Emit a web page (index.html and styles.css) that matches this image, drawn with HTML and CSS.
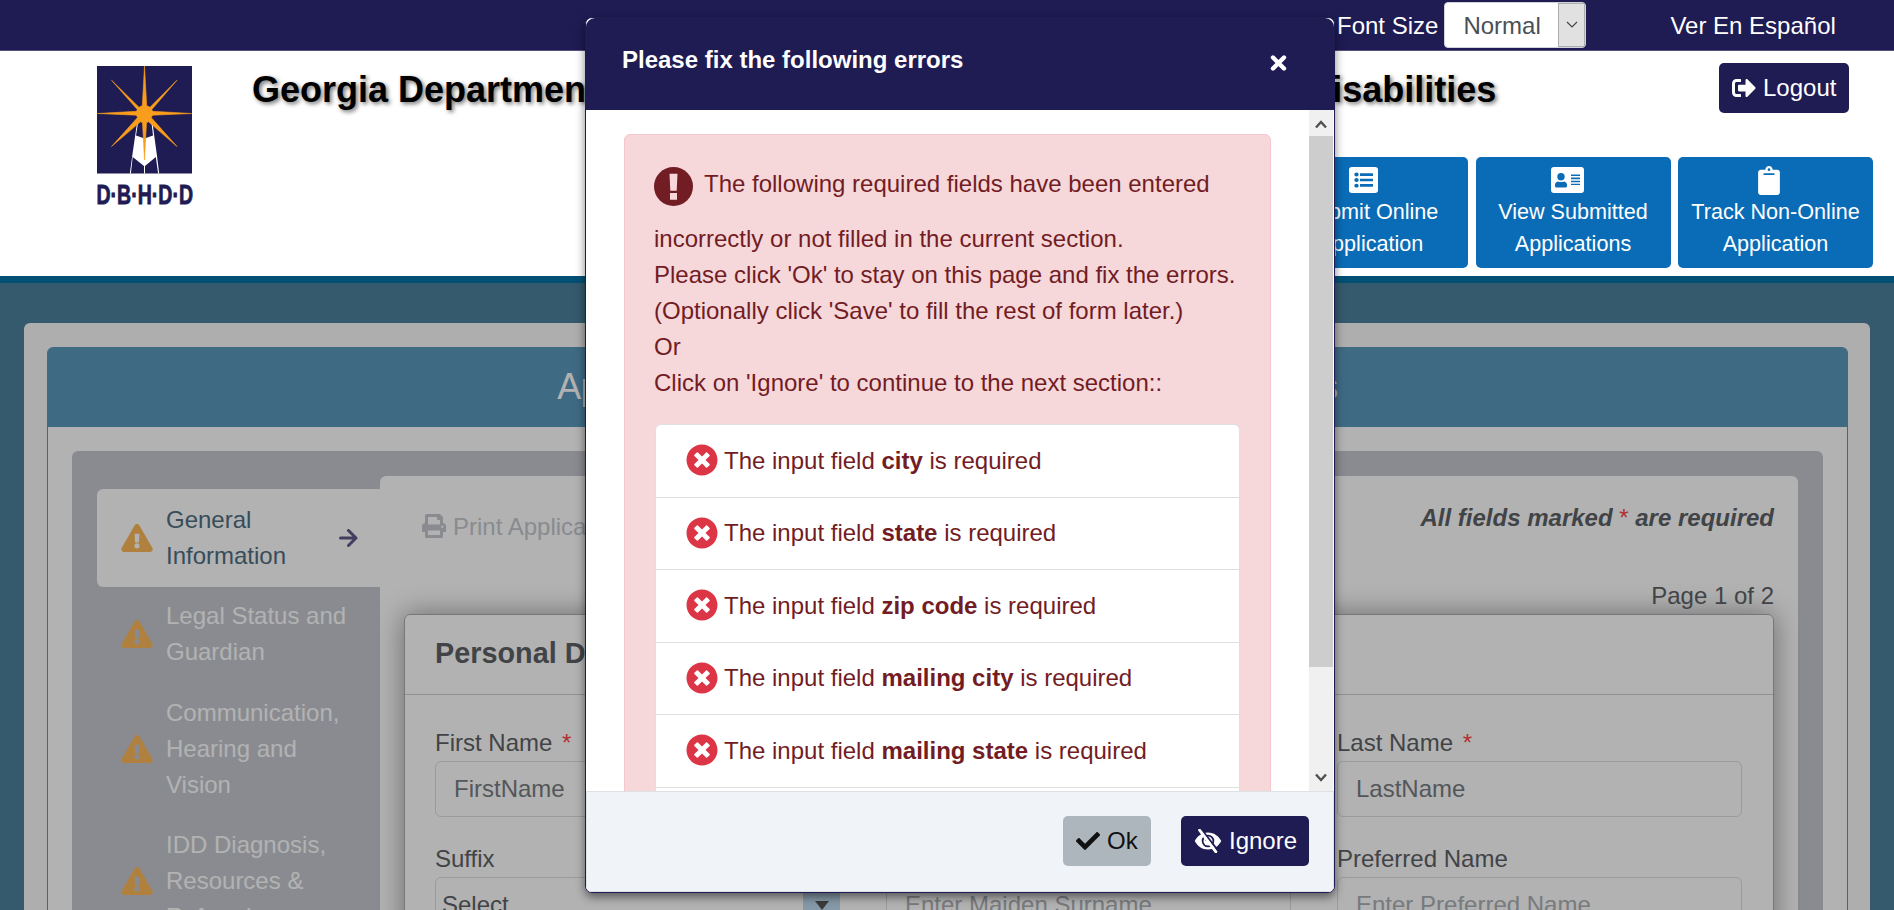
FILE: index.html
```
<!DOCTYPE html>
<html lang="en">
<head>
<meta charset="utf-8">
<title>DBHDD Application</title>
<link rel="stylesheet" href="styles.css">
</head>
<body>
<svg class="defs" aria-hidden="true">
  <symbol id="warn" viewBox="0 0 576 512"><path d="M569.5 440c18.500 32-4.700 72-41.600 72H48.100c-36.900 0-60-40.100-41.600-72L246.400 24c18.500-32 64.700-32 83.200 0l239.900 416zM288 354a46 46 0 1 0 0 92 46 46 0 0 0 0-92zm-43.700-165.300l7.400 136c.4 6.400 5.600 11.300 12 11.300h48.600c6.400 0 11.600-4.900 12-11.300l7.400-136c.4-6.900-5.100-12.700-12-12.700h-63.400c-6.900 0-12.400 5.800-12 12.700z"/></symbol>
  <symbol id="bad" viewBox="0 0 512 512"><path d="M256 8C119 8 8 119 8 256s111 248 248 248 248-111 248-248S393 8 256 8zm121.600 313.100c4.700 4.700 4.700 12.300 0 17L338 377.600c-4.700 4.700-12.300 4.700-17 0L256 312l-65.100 65.600c-4.700 4.700-12.300 4.700-17 0L134.400 338c-4.700-4.700-4.700-12.300 0-17l65.600-65-65.600-65.100c-4.700-4.700-4.700-12.300 0-17l39.600-39.600c4.700-4.700 12.300-4.700 17 0l65 65.700 65.100-65.600c4.700-4.700 12.300-4.700 17 0l39.600 39.600c4.700 4.700 4.700 12.300 0 17L312 256z"/></symbol>
</svg>

<header class="site-header">
  <div class="topbar">
    <span class="font-label">Font Size</span>
    <div class="size-select"><span>Normal</span><i><svg viewBox="0 0 12 8"><path d="M1 1l5 5 5-5" fill="none" stroke="#444" stroke-width="1.200"/></svg></i></div>
    <a class="lang">Ver En Español</a>
  </div>
  <div class="masthead">
    <svg class="logo" viewBox="0 0 96 140">
      <rect width="95" height="107.500" fill="#1f1b53"/>
      <path d="M40 57h1L39 69.500l8.500 3 8.500-3L54.500 57h1L60 90l2.200 17.500h-1.100L58.800 91 48 100v7.500h-1V100L35.700 91l-1.800 16.500h-1.100L35.500 88z" fill="#fff"/>
      <path d="M47.500 0l2.200 39.500 3.300 1.800L80 14.200 54.800 43.500l.9 1.800L94.500 47.500l-38.800 1.700-1.500 2.300L80 80.500 51.500 55.800l-2 1L47.500 94l-2-37.200-2-1L14.500 80.500 40.500 51.500l-1.200-2.300L.5 47.500l38.800-2.200 1-1.800L14.500 14.200 42 41.300l3.300-1.800z" fill="#f99d1c" stroke="#f99d1c" stroke-width=".6"/>
      <text x="-.5" y="138" textLength="96.500" lengthAdjust="spacingAndGlyphs" class="logo-text">D·B·H·D·D</text>
    </svg>
    <h1>Georgia Department of Behavioral Health and Developmental Disabilities</h1>
    <div class="actions">
      <a class="btn navy logout"><svg viewBox="0 0 512 512"><path d="M497 273L329 441c-15 15-41 4.500-41-17v-96H152c-13.300 0-24-10.700-24-24v-96c0-13.300 10.700-24 24-24h136V88c0-21.400 25.900-32 41-17l168 168c9.300 9.400 9.300 24.600 0 34zM192 436v-40c0-6.600-5.400-12-12-12H96c-17.700 0-32-14.300-32-32V160c0-17.700 14.300-32 32-32h84c6.600 0 12-5.400 12-12V76c0-6.600-5.400-12-12-12H96c-53 0-96 43-96 96v192c0 53 43 96 96 96h84c6.600 0 12-5.400 12-12z"/></svg>Logout</a>
      <nav class="tiles">
        <a><svg viewBox="0 0 29 29" preserveAspectRatio="none"><path fill-rule="evenodd" d="M3 0h23a3 3 0 0 1 3 3v23a3 3 0 0 1-3 3H3a3 3 0 0 1-3-3V3a3 3 0 0 1 3-3zM11 7v3h13V7zm0 6v3h13v-3zm0 6v3h13v-3zM7.500 6.200a2.200 2.200 0 1 0 0 4.400 2.200 2.200 0 0 0 0-4.400zm0 6.200a2.200 2.200 0 1 0 0 4.400 2.200 2.200 0 0 0 0-4.400zm0 6.200a2.200 2.200 0 1 0 0 4.400 2.200 2.200 0 0 0 0-4.400z"/></svg>Submit Online<br>Application</a>
        <a><svg class="wide" viewBox="0 0 33 26"><path fill-rule="evenodd" d="M3 0h27a3 3 0 0 1 3 3v20a3 3 0 0 1-3 3H3a3 3 0 0 1-3-3V3a3 3 0 0 1 3-3zM10 6a3.700 3.700 0 1 0 0 7.400A3.700 3.700 0 0 0 10 6zm-3 8.500Q4 15 4 18v1q0 1.500 1.500 1.500h9Q16 20.500 16 19v-1q0-3-3-3.500-3 1-6 0zM20 7.500V9h9V7.500zm0 3v1.700h9v-1.700zm0 3.200v1.500h9v-1.500zm0 3V18h9v-1.300z"/></svg>View Submitted<br>Applications</a>
        <a><svg class="clip" viewBox="0 0 384 512"><path fill-rule="evenodd" d="M384 112v352c0 26.500-21.500 48-48 48H48c-26.500 0-48-21.500-48-48V112c0-26.500 21.500-48 48-48h80c0-35.300 28.700-64 64-64s64 28.700 64 64h80c26.500 0 48 21.500 48 48zM192 40a24 24 0 1 0 0 48 24 24 0 0 0 0-48zM96 130v20q0 10 10 10h172q10 0 10-10v-20z"/></svg>Track Non-Online<br>Application</a>
      </nav>
    </div>
  </div>
</header>

<main class="page">
  <section class="shell">
    <div class="app">
      <h2>Application for Developmental Disabilities Services</h2>
      <div class="app-body">
        <div class="wizard">
          <nav class="tabs">
            <a class="tab active"><svg class="w"><use href="#warn"/></svg><span>General Information</span><svg class="arrow" viewBox="0 0 19 18"><path d="M1.500 9h15.500M9.500 1.500L17 9l-7.500 7.500" fill="none" stroke="currentColor" stroke-width="3" stroke-linecap="round" stroke-linejoin="round"/></svg></a>
            <a class="tab"><svg class="w"><use href="#warn"/></svg><span>Legal Status and Guardian</span></a>
            <a class="tab"><svg class="w"><use href="#warn"/></svg><span>Communication, Hearing and Vision</span></a>
            <a class="tab"><svg class="w"><use href="#warn"/></svg><span>IDD Diagnosis, Resources &amp; Referrals</span></a>
          </nav>
          <div class="panel">
            <div class="tools">
              <a class="print"><svg viewBox="0 0 512 512"><path fill-rule="evenodd" d="M448 192V77.300c0-8.500-3.400-16.600-9.400-22.600L393.400 9.400c-6-6-14.100-9.400-22.600-9.400H96C78.300 0 64 14.300 64 32v160c-35.300 0-64 28.700-64 64v112c0 8.800 7.200 16 16 16h48v96c0 17.700 14.300 32 32 32h320c17.700 0 32-14.300 32-32v-96h48c8.800 0 16-7.200 16-16V256c0-35.300-28.700-64-64-64zm-64 256H128v-96h256v96zm0-224H128V64h192v48c0 8.800 7.200 16 16 16h48v96zm48 72c-13.300 0-24-10.700-24-24s10.700-24 24-24 24 10.700 24 24-10.700 24-24 24z"/></svg>Print Application</a>
              <strong>All fields marked <em class="req">*</em> are required</strong>
            </div>
            <p class="pager">Page 1 of 2</p>
            <div class="card">
              <h3>Personal Details</h3>
              <div class="grid">
                <div><label>First Name <em class="req">*</em></label><div class="input">FirstName</div></div>
                <div><label>Middle Name</label><div class="input">MiddleName</div></div>
                <div><label>Last Name <em class="req">*</em></label><div class="input">LastName</div></div>
                <div><label>Suffix</label><div class="input select"><span>Select</span><i></i></div></div>
                <div><label>Maiden Surname</label><div class="input hint">Enter Maiden Surname</div></div>
                <div><label>Preferred Name</label><div class="input hint">Enter Preferred Name</div></div>
              </div>
            </div>
          </div>
        </div>
      </div>
    </div>
  </section>
  <div class="overlay"></div>
</main>

<div class="modal" role="dialog">
  <div class="modal-head"><h4>Please fix the following errors</h4><svg viewBox="0 0 17 16"><path d="M3 2.500l11 11M14 2.500l-11 11" stroke="#fff" stroke-width="4.400" stroke-linecap="round"/></svg></div>
  <div class="modal-body">
    <div class="scroll">
      <div class="alert">
        <p><svg class="bang" viewBox="0 0 39 39"><circle cx="19.500" cy="19.500" r="19.500" fill="#721c24"/><path d="M15.500 6.800h8l-.8 17h-6.400zM16 26h7v6.800h-7z" fill="#f8d7da"/></svg>The following required fields have been entered incorrectly or not filled in the current section.<br>Please click 'Ok' to stay on this page and fix the errors.<br>(Optionally click 'Save' to fill the rest of form later.)<br>Or<br>Click on 'Ignore' to continue to the next section::</p>
        <ul>
          <li><svg><use href="#bad"/></svg><span>The input field <b>city</b> is required</span></li>
          <li><svg><use href="#bad"/></svg><span>The input field <b>state</b> is required</span></li>
          <li><svg><use href="#bad"/></svg><span>The input field <b>zip code</b> is required</span></li>
          <li><svg><use href="#bad"/></svg><span>The input field <b>mailing city</b> is required</span></li>
          <li><svg><use href="#bad"/></svg><span>The input field <b>mailing state</b> is required</span></li>
          <li></li>
        </ul>
      </div>
    </div>
    <div class="bar"><svg viewBox="0 0 12 10"><path d="M1 8.500L6 3l5 5.500" fill="none" stroke="#505050" stroke-width="2.400"/></svg><i></i><svg viewBox="0 0 12 10"><path d="M1 1.500L6 7l5-5.500" fill="none" stroke="#505050" stroke-width="2.400"/></svg></div>
  </div>
  <div class="modal-foot">
    <a class="btn gray"><svg viewBox="0 0 512 512"><path d="M173.900 439.400L7.500 273c-10-10-10-26.200 0-36.200l36.200-36.200c10-10 26.200-10 36.200 0L192 312.700 432.100 72.600c10-10 26.200-10 36.200 0l36.200 36.200c10 10 10 26.200 0 36.200L210.100 439.400c-10 10-26.200 10-36.200 0z"/></svg>Ok</a>
    <a class="btn navy ignore"><svg class="eye" viewBox="0 0 28 24"><path fill-rule="evenodd" d="M14 3.500c6 0 10.500 3.500 13.300 8.500C24.500 17 20 20.500 14 20.500S3.500 17 .7 12C3.500 7 8 3.500 14 3.500zm0 2.200a6.300 6.300 0 1 0 0 12.600 6.300 6.300 0 0 0 0-12.600z"/><circle cx="14" cy="12" r="4.500"/><circle cx="12.500" cy="10.500" r="1.600" fill="#1f1b53"/><path d="M7.800 .8l16 20.500" stroke="#1f1b53" stroke-width="2"/><path d="M5.600 1.200l16.300 21.600" stroke="#fff" stroke-width="2.800" stroke-linecap="round"/></svg>Ignore</a>
  </div>
</div>
</body>
</html>
```
FILE: styles.css
```
* { box-sizing: border-box; }
html, body { margin: 0; height: 910px; overflow: hidden; }
body { font: 24px/36px "Liberation Sans", Arial, sans-serif; color: #212529; background: #4d829c; display: flex; flex-direction: column; }
h1, h2, h3, h4, p, ul { margin: 0; padding: 0; }
svg { display: block; flex: none; fill: currentColor; }
.defs { position: absolute; width: 0; height: 0; }
.site-header { height: 283px; flex: none; background: #fff; border-bottom: 7px solid #035074; }

.topbar { height: 51px; background: #1f1b53; border-bottom: 1px solid #56527d; color: #fff; display: flex; align-items: center; padding-left: 1337px; }
.font-label, .lang { padding-top: 1px; }
.size-select { width: 142px; height: 46px; margin-left: 6px; border: 1px solid #ced4da; border-radius: 4px; background: #fff; color: #495057; display: flex; justify-content: space-between; padding-left: 18px; line-height: 46px; }
.size-select i { width: 27px; background: #e1e1e1; border: 1px solid #adadad; display: flex; align-items: center; justify-content: center; }
.size-select svg { width: 12px; height: 8px; }
.lang { margin-left: 84px; }

.masthead { height: 225px; display: flex; padding-left: 97px; position: relative; }
.logo { width: 96px; height: 140px; margin-top: 15px; }
.logo-text { font: bold 28px "Liberation Sans", Arial, sans-serif; fill: #1f1b53; stroke: #1f1b53; stroke-width: .9px; }
h1 { font-size: 36px; line-height: 44px; margin: 17px 0 0 59px; color: #000; white-space: nowrap; text-shadow: 2px 2px 4px rgba(0,0,0,.55); }
.actions { position: absolute; right: 21px; top: 12px; display: flex; flex-direction: column; align-items: flex-end; }
.btn { display: flex; align-items: center; height: 50px; padding: 0 13px; border-radius: 5px; }
.btn svg { width: 24px; height: 24px; margin-right: 7px; }
.btn .eye { width: 28px; }
.navy { background: #1f1b53; color: #fff; }
.ignore { width: 128px; }
.gray { background: #adb5bd; color: #111; width: 88px; }
.logout { margin-right: 24px; width: 130px; }
.tiles { display: flex; gap: 7.500px; margin-top: 44px; }
.tiles a { width: 195px; height: 111px; border-radius: 5px; background: #0a6cb6; color: #fff; font-size: 21.600px; line-height: 32.400px; text-align: center; padding-top: 10px; white-space: nowrap; }
.tiles svg { width: 29px; height: 26px; margin: 0 0 3px 76px; }
.tiles .wide { width: 33px; margin-left: 75px; }
.tiles .clip { width: 22px; height: 29px; margin: -1px 0 1px 80px; }

.page { flex: 1; position: relative; overflow: hidden; padding: 40px 24px 0; }
.overlay { position: absolute; inset: 0; background: rgba(0,0,0,.3); }
.shell { background: #fafafa; border-radius: 6px; padding: 24px 22px 0 23px; height: 700px; }
.app { background: #fff; border: 1px solid #5b99bd; border-radius: 6px 6px 0 0; height: 700px; }
h2 { height: 79px; background: #5b99bd; border-radius: 4px 4px 0 0; color: #fff; font-weight: 400; font-size: 36px; line-height: 78px; text-align: center; letter-spacing: -.55px; }
.app-body { padding: 24px; }
.wizard { background: #c4c8cf; border-radius: 6px; padding: 25px 25px 0 25px; display: flex; height: 700px; }
.tabs { width: 283px; padding-top: 13px; flex: none; }
.tab { display: flex; align-items: center; min-height: 96.500px; padding: 12px 22px 12px 24px; color: #fff; }
.tab .w { width: 32px; height: 28px; margin-right: 13px; color: #fbb85a; }
.tab span { flex: 1; padding-right: 10px; }
.tab.active { background: #fff; color: #4a6f86; border-radius: 6px 0 0 6px; height: 98px; margin-bottom: -1px; }
.arrow { width: 19px; height: 18px; color: #605a8a; }
.active span { color: #506f82; }
.panel { flex: 1; background: #fff; border-radius: 6px 6px 0 0; padding: 24px 24px 0 24px; color: #5e6266; }
.tools { display: flex; justify-content: space-between; height: 78px; }
.tools strong { font-style: italic; }
.print { display: flex; color: #c4c8cf; padding: 9px 0 0 18px; }
.print svg { width: 24px; height: 24px; margin: 5px 7px 0 0; }
.req { color: #ff4545; font-style: normal; font-weight: 400; }
.pager { text-align: right; }
.card { border: 1px solid #aaaab2; border-radius: 6px; height: 500px; box-shadow: 0 0 28px rgba(0,0,0,.4); }
h3 { height: 80px; border-bottom: 1px solid #d0d0d0; padding: 21px 0 0 30px; font-size: 28.800px; line-height: 35px; }
.grid { display: grid; grid-template-columns: repeat(3, 405px); column-gap: 46px; row-gap: 23px; padding: 29px 0 0 30px; }
label { display: block; line-height: 37px; }
label .req { margin-left: 3px; }
.input { height: 56px; border: 1px solid #dcdee1; border-radius: 6px; padding: 0 18px; line-height: 54px; color: #787d82; }
.hint { color: #acb0b4; }
.select { padding: 0 0 0 6px; display: flex; justify-content: space-between; color: #5e6266; }
.select i { width: 37px; margin-right: -1px; background: #c0dcf1; display: flex; }
.select i::before { content: ""; margin: 23px auto 0; height: 0; border: 7px solid transparent; border-top: 9px solid #555; border-bottom: 0; }

.modal { position: absolute; left: 585px; top: 17px; width: 750px; height: 876px; background: #fff; border: 1px solid #1f1b53; border-radius: 7px; display: flex; flex-direction: column; overflow: hidden; box-shadow: 0 4px 10px rgba(0,0,0,.5); }
.modal-head { height: 92px; flex: none; background: #1f1b53; border-radius: 9px 9px 0 0; color: #fff; display: flex; justify-content: space-between; padding: 24px 47px 0 36px; }
h4 { font-size: 24px; line-height: 36px; }
.modal-head svg { width: 17px; height: 16px; margin-top: 13px; }
.modal-body { flex: 1; min-height: 0; display: flex; overflow: hidden; }
.scroll { width: 723px; padding: 24px 38px 0 38px; color: #721c24; }
.alert { background: #f6d7da; border: 1px solid #f5c6cb; border-radius: 6px; padding: 18px 30px 18px 29px; height: 900px; }
.alert p { margin-right: -20px; }
.bang { display: inline-block; width: 39px; height: 39px; margin: 14px 11px 15px 0; vertical-align: -29px; }
ul { list-style: none; background: #fff; border: 1px solid #dfdfdf; border-radius: 6px; margin: 23px 0 0 1px; }
li { height: 72.500px; display: flex; align-items: center; border-bottom: 1px solid #dfdfdf; padding-left: 30px; }
li svg { width: 32px; height: 32px; color: #dc3545; margin: -1px 6px 0 0; }
.bar { width: 24px; background: #f0f0f0; display: flex; flex-direction: column; }
.bar svg { width: 12px; height: 10px; margin: 9px 6px 7px; }
.bar i { height: 531px; background: #cdcdcd; }
.bar svg:last-child { margin: auto 6px 8px; }
.modal-foot { height: 101px; flex: none; background: #f0f4f8; border: 1px solid #dee2e6; display: flex; justify-content: flex-end; gap: 30px; padding: 24px 24px 0; }
```
